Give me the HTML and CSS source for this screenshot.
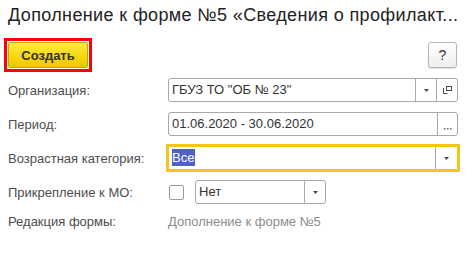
FILE: index.html
```html
<!DOCTYPE html>
<html lang="ru">
<head>
<meta charset="utf-8">
<title>Дополнение к форме №5</title>
<link rel="stylesheet" href="styles.css">
</head>
<body>
<div class="page">
  <h1 class="title">Дополнение к форме №5 «Сведения о профилакт...</h1>
  <div class="toolbar">
    <div class="mark"><button class="btn-create">Создать</button></div>
    <button class="btn-help">?</button>
  </div>
  <div class="form">
    <div class="row">
      <span class="label">Организация:</span>
      <div class="field">
        <span class="value">ГБУЗ ТО "ОБ № 23"</span>
        <span class="seg"><svg width="5" height="3" viewBox="0 0 5 3"><path d="M0 0h5L2.5 3z" fill="#4a4a4a"/></svg></span>
        <span class="seg seg-open"><svg width="9" height="8" viewBox="0 0 9 8"><rect x="3.5" y="0.5" width="5" height="4" fill="none" stroke="#4a4a4a"/><path d="M0.5 2v5.5h4" fill="none" stroke="#4a4a4a"/></svg></span>
      </div>
    </div>
    <div class="row">
      <span class="label">Период:</span>
      <div class="field">
        <span class="value">01.06.2020 - 30.06.2020</span>
        <span class="seg seg-open seg-dots"><svg width="8" height="2" viewBox="0 0 8 2"><rect x="0" y="0" width="1.5" height="1.5" fill="#666"/><rect x="3" y="0" width="1.5" height="1.5" fill="#666"/><rect x="6" y="0" width="1.5" height="1.5" fill="#666"/></svg></span>
      </div>
    </div>
    <div class="row">
      <span class="label">Возрастная категория:</span>
      <div class="field focused">
        <span class="value"><span class="sel">Все</span></span>
        <span class="seg seg-focus"><svg width="5" height="3" viewBox="0 0 5 3"><path d="M0 0h5L2.5 3z" fill="#4a4a4a"/></svg></span>
      </div>
    </div>
    <div class="row">
      <span class="label">Прикрепление к МО:</span>
      <span class="check"></span>
      <div class="field field-small">
        <span class="value">Нет</span>
        <span class="seg"><svg width="5" height="3" viewBox="0 0 5 3"><path d="M0 0h5L2.5 3z" fill="#4a4a4a"/></svg></span>
      </div>
    </div>
    <div class="row row-text">
      <span class="label">Редакция формы:</span>
      <span class="plain">Дополнение к форме №5</span>
    </div>
  </div>
</div>
</body>
</html>
```

FILE: styles.css
```css
html, body {
  margin: 0;
  padding: 0;
  background: #ffffff;
}
body {
  font-family: "Liberation Sans", Arial, sans-serif;
  font-size: 13px;
  color: #333333;
}
.page {
  width: 472px;
  height: 271px;
  overflow: hidden;
}
.title {
  margin: 0;
  padding: 5px 0 0 8px;
  height: 33px;
  box-sizing: border-box;
  font-size: 18px;
  font-weight: normal;
  line-height: 21px;
  letter-spacing: 0.37px;
  color: #222222;
  white-space: nowrap;
}
.toolbar {
  display: flex;
  align-items: center;
  justify-content: space-between;
  padding: 0 15px 0 4px;
  margin-top: 5px;
  height: 34px;
}
.mark {
  box-sizing: border-box;
  width: 88px;
  height: 34px;
  border: 3px solid #ff0000;
  padding: 1px;
  display: flex;
}
.btn-create {
  box-sizing: border-box;
  width: 80px;
  height: 26px;
  margin: 0;
  border: 1px solid #c2a500;
  border-radius: 2px;
  background: linear-gradient(#ffea4a, #f7d80c 55%, #efc800);
  font-family: "Liberation Sans", Arial, sans-serif;
  font-size: 13px;
  font-weight: bold;
  color: #333333;
  padding: 0;
}
.btn-help {
  box-sizing: border-box;
  width: 29px;
  height: 26px;
  border: 1px solid #b5b5b5;
  border-radius: 3px;
  background: linear-gradient(#ffffff, #eeeeee);
  box-shadow: 0 1px 1px rgba(0,0,0,0.12);
  font-family: "Liberation Sans", Arial, sans-serif;
  font-size: 14px;
  color: #333333;
  padding: 0;
}
.form {
  margin-top: 6px;
  display: flex;
  flex-direction: column;
  gap: 10px;
}
.row {
  display: flex;
  align-items: center;
  height: 24px;
  padding-left: 8px;
}
.row-text {
  height: 14px;
}
.label {
  width: 160px;
  flex: none;
  color: #4d4d4d;
  white-space: nowrap;
}
.field {
  box-sizing: border-box;
  width: 290px;
  height: 24px;
  border: 1px solid #a8a8a8;
  border-radius: 3px;
  display: flex;
  align-items: stretch;
  background: #ffffff;
}
.value {
  flex: 1;
  padding-left: 3px;
  line-height: 22px;
  color: #333333;
  white-space: nowrap;
  overflow: hidden;
}
.seg {
  flex: none;
  width: 20px;
  border-left: 1px solid #a8a8a8;
  display: flex;
  align-items: center;
  justify-content: center;
}
.seg-open {
  width: 20px;
}
.seg-dots {
  align-items: flex-end;
  padding-bottom: 5px;
  box-sizing: border-box;
}
.focused {
  border-color: #f5c518;
  border-radius: 0;
  box-shadow: 0 0 0 2px #f5c518;
}
.seg-focus {
  width: 21px;
}
.sel {
  background: #4e62c6;
  color: #ffffff;
  padding: 1px 1px 1px 0;
}
.check {
  box-sizing: border-box;
  width: 15px;
  height: 15px;
  flex: none;
  border: 1px solid #9a9a9a;
  border-radius: 2px;
  background: #ffffff;
  margin-left: 1px;
  margin-right: 11px;
}
.field-small {
  width: 131px;
}
.plain {
  color: #8c8c8c;
  white-space: nowrap;
}
```
